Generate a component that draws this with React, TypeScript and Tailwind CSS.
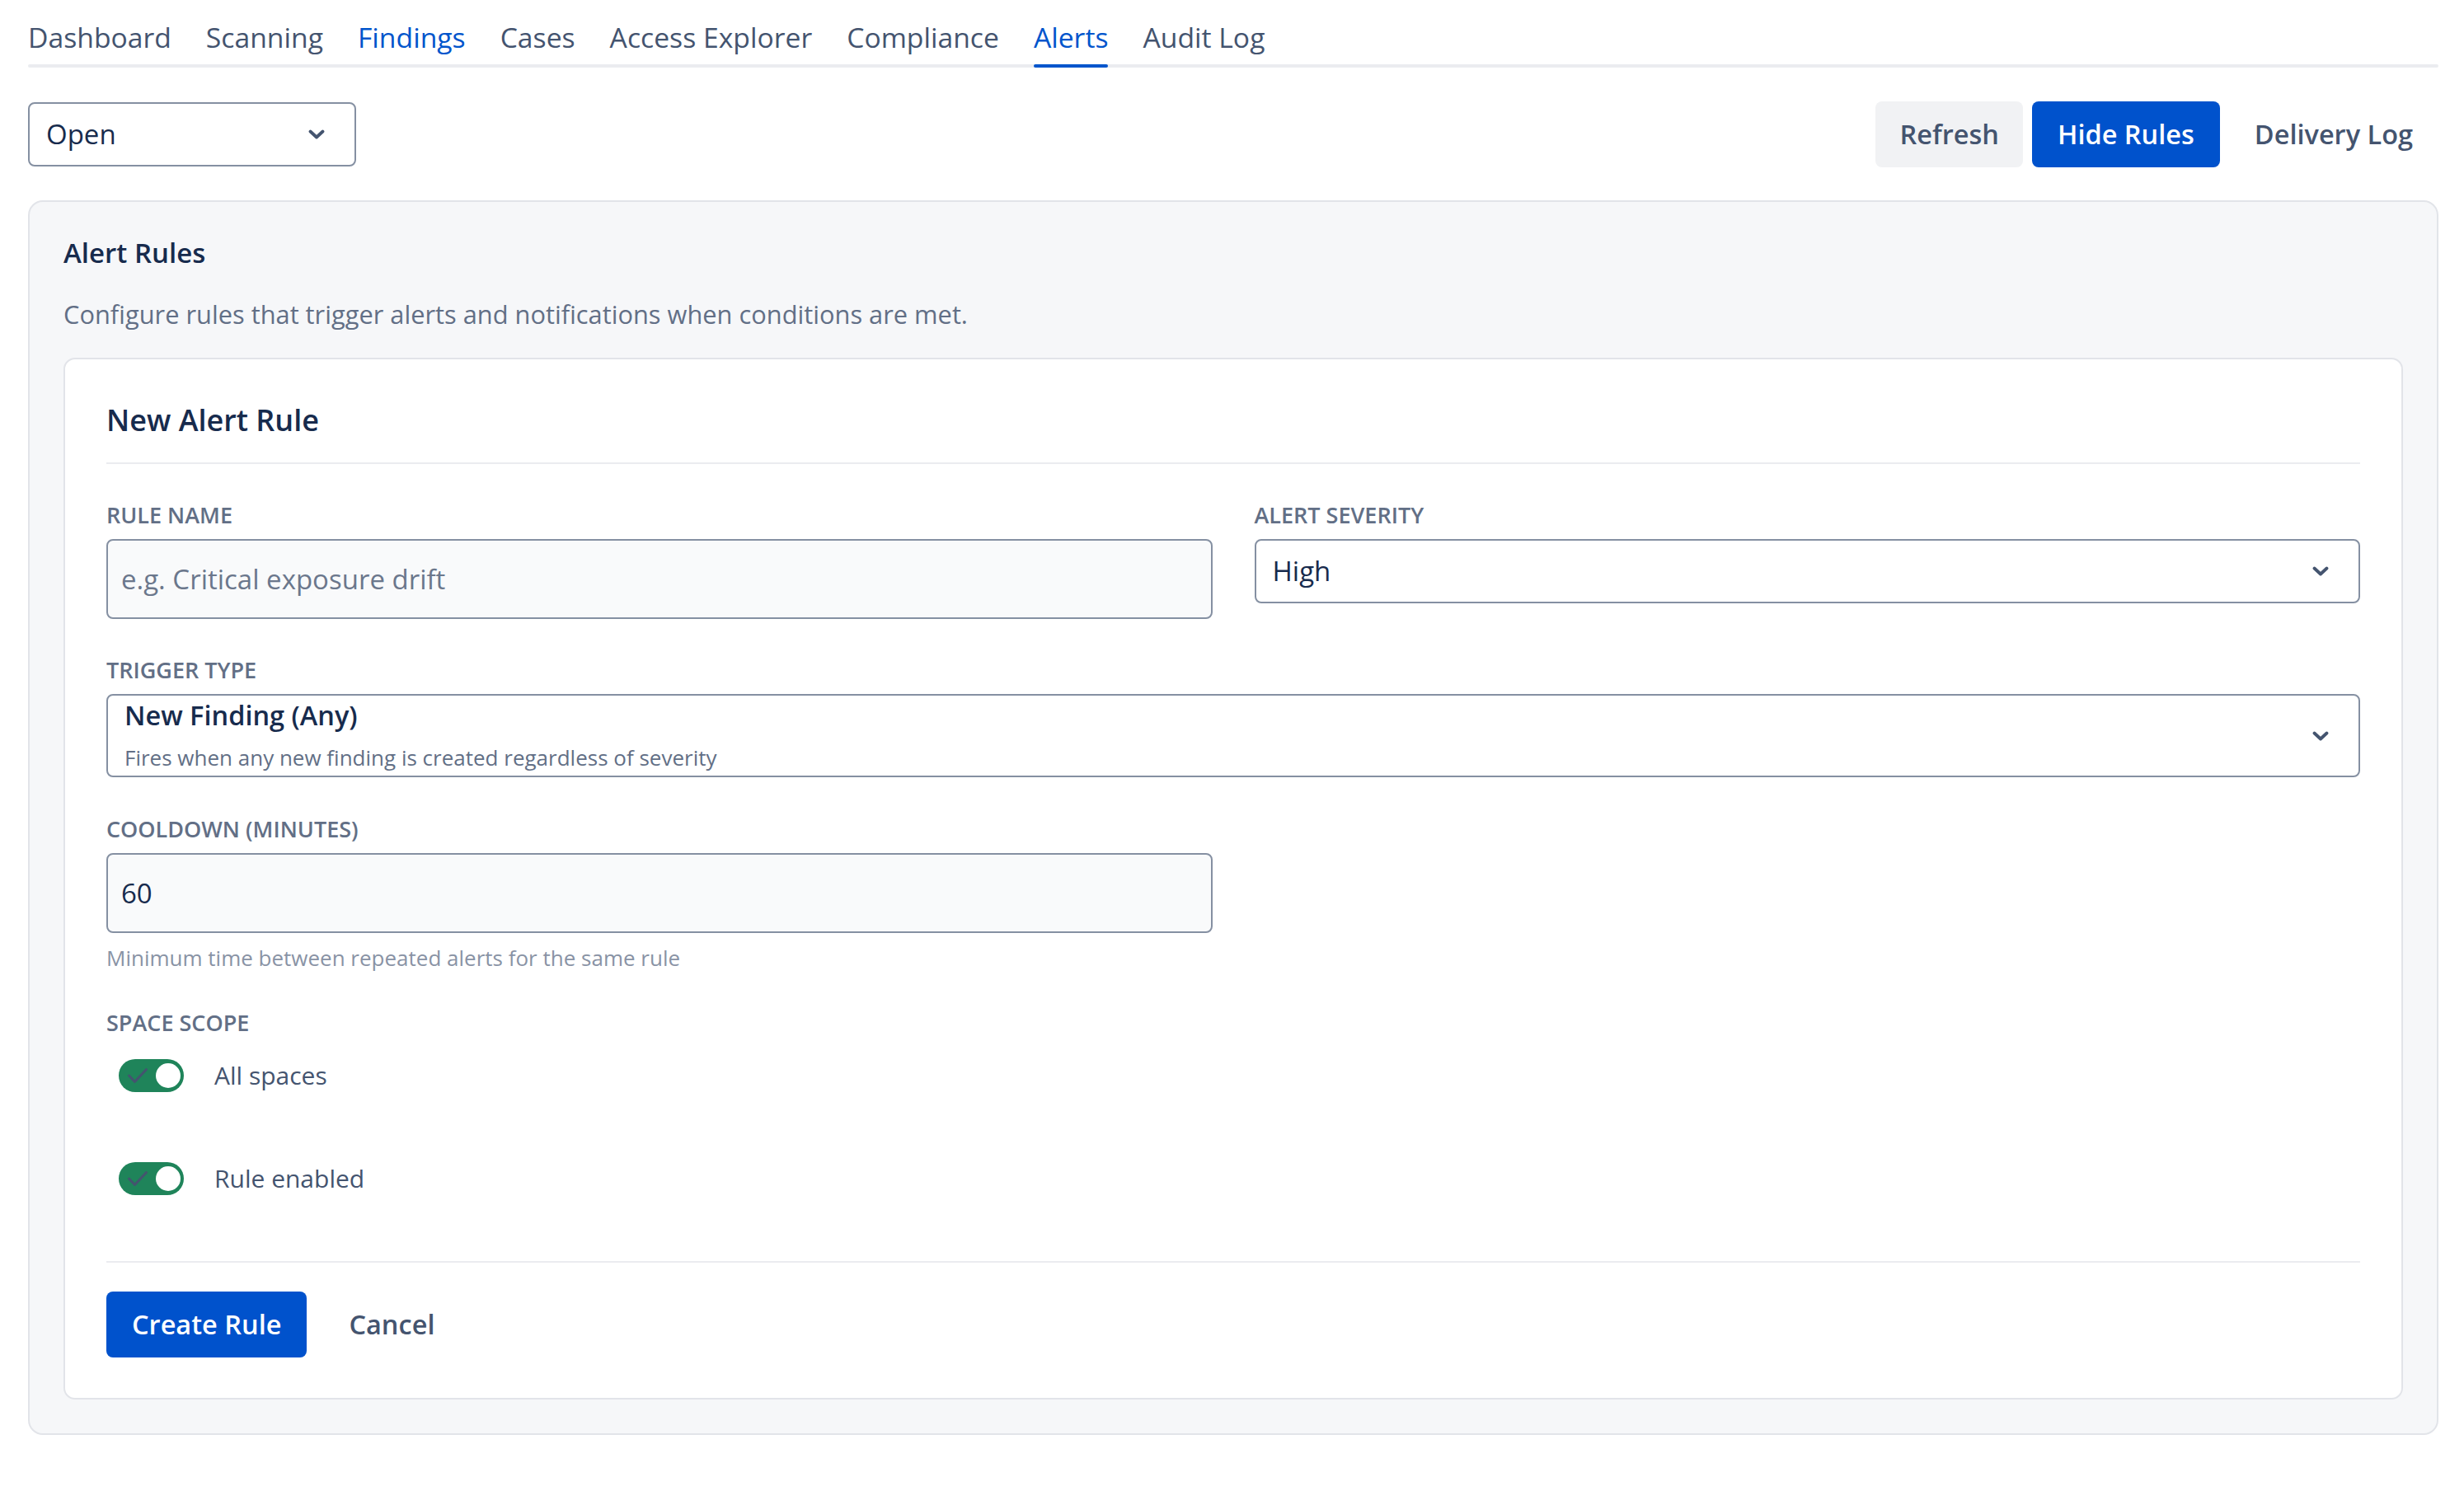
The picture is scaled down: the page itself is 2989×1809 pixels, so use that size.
import React from 'react'

const tabs = [
  'Dashboard',
  'Scanning',
  'Findings',
  'Cases',
  'Access Explorer',
  'Compliance',
  'Alerts',
  'Audit Log',
]

function Chevron() {
  return (
    <svg width="20" height="12" viewBox="0 0 20 12" fill="none" className="shrink-0">
      <path
        d="M2.5 2.5 L10 9.5 L17.5 2.5"
        stroke="#44546f"
        strokeWidth="3.8"
        strokeLinecap="round"
        strokeLinejoin="round"
      />
    </svg>
  )
}

function FieldLabel({ children }: { children: React.ReactNode }) {
  return (
    <div className="mb-[11px] text-[27px] font-semibold leading-[36px] text-[#626f86]">
      {children}
    </div>
  )
}

function Toggle({ label, className = '' }: { label: string; className?: string }) {
  return (
    <div className={`flex items-center pl-[15px] ${className}`}>
      <span className="relative inline-block h-[40px] w-[79px] shrink-0 rounded-full bg-[#1f845a]">
        <svg className="absolute left-0 top-0" width="79" height="40" viewBox="0 0 79 40" fill="none">
          <path
            d="M12.5 20 L19.5 27.5 L33.5 12.5"
            stroke="#44546f"
            strokeWidth="3"
            strokeLinecap="round"
            strokeLinejoin="round"
          />
        </svg>
        <span className="absolute right-[4px] top-[5px] h-[30px] w-[30px] rounded-full bg-white" />
      </span>
      <span className="ml-[37px] text-[30px] leading-[40px] text-[#44546f]">{label}</span>
    </div>
  )
}

export default function App() {
  return (
    <div className="min-h-screen bg-white pl-[34px] pr-[31px] font-['Open_Sans','Noto_Sans',sans-serif] text-[#172b4d]">
      {/* Section tabs */}
      <nav className="flex gap-[42px] pt-[22px]">
        {tabs.map((tab) => {
          const active = tab === 'Alerts'
          const linked = tab === 'Findings'
          return (
            <button
              key={tab}
              className={`relative pb-[10px] text-[33.7px] font-medium leading-[46px] ${
                active || linked ? 'text-[#0055cc]' : 'text-[#44546f]'
              }`}
            >
              {tab}
              {active && (
                <span className="absolute -bottom-[4px] left-0 right-0 z-10 h-[4px] rounded-full bg-[#0055cc]" />
              )}
            </button>
          )
        })}
      </nav>
      <div className="h-[4px] rounded-full bg-[#ebecf0]" />

      {/* Toolbar */}
      <div className="mt-[41px] flex items-center justify-between">
        <button className="flex h-[78px] w-[398px] items-center justify-between rounded-[8px] border-2 border-[#8590a2] bg-white pl-[20px] pr-[36px] text-[33px] leading-[44px] text-[#172b4d]">
          <span>Open</span>
          <Chevron />
        </button>
        <div className="flex items-center gap-[11px]">
          <button className="h-[80px] rounded-[8px] bg-[#f1f2f4] px-[29px] text-[32.5px] font-semibold text-[#44546f]">
            Refresh
          </button>
          <button className="h-[80px] rounded-[8px] bg-[#0052cc] px-[31px] text-[32.5px] font-semibold text-white">
            Hide Rules
          </button>
          <button className="h-[80px] rounded-[8px] px-[31px] text-[32.5px] font-semibold text-[#44546f]">
            Delivery Log
          </button>
        </div>
      </div>

      {/* Alert rules panel */}
      <section className="mt-[40px] rounded-[18px] border-2 border-[#e2e4e9] bg-[#f6f7f9] px-[41px] pb-[41px] pt-[42px]">
        <h2 className="text-[33px] font-semibold leading-[40px] text-[#172b4d]">Alert Rules</h2>
        <p className="mt-[32px] text-[30.8px] leading-[44px] text-[#626f86]">
          Configure rules that trigger alerts and notifications when conditions are met.
        </p>

        <div className="mt-[31px] rounded-[14px] border-2 border-[#e2e4e9] bg-white px-[50px] pb-[49px] pt-[50px]">
          <div className="border-b-2 border-[#ebecf0] pb-[27px]">
            <h3 className="text-[36px] font-semibold leading-[48px] text-[#172b4d]">New Alert Rule</h3>
          </div>

          <div className="mt-[44px] grid grid-cols-2 gap-x-[51px]">
            <div>
              <FieldLabel>RULE NAME</FieldLabel>
              <input
                type="text"
                placeholder="e.g. Critical exposure drift"
                className="h-[97px] w-full rounded-[8px] border-2 border-[#8590a2] bg-[#f9fafb] pl-[16px] text-[33px] text-[#172b4d] outline-none placeholder:text-[#6b778c]"
              />
            </div>
            <div>
              <FieldLabel>ALERT SEVERITY</FieldLabel>
              <button className="flex h-[78px] w-full items-center justify-between rounded-[8px] border-2 border-[#8590a2] bg-white pl-[20px] pr-[36px] text-[33px] text-[#172b4d]">
                <span>High</span>
                <Chevron />
              </button>
            </div>
          </div>

          <div className="mt-[44px]">
            <FieldLabel>TRIGGER TYPE</FieldLabel>
            <button className="flex h-[101px] w-full items-center justify-between rounded-[8px] border-2 border-[#8590a2] bg-white pl-[20px] pr-[36px] text-left">
              <span className="flex flex-col">
                <span className="text-[32.5px] font-semibold leading-[40px] text-[#172b4d]">New Finding (Any)</span>
                <span className="mt-[13px] text-[26px] leading-[36px] text-[#626f86]">
                  Fires when any new finding is created regardless of severity
                </span>
              </span>
              <Chevron />
            </button>
          </div>

          <div className="mt-[45px] grid grid-cols-2 gap-x-[51px]">
            <div>
              <FieldLabel>COOLDOWN (MINUTES)</FieldLabel>
              <input
                type="text"
                defaultValue="60"
                className="h-[97px] w-full rounded-[8px] border-2 border-[#8590a2] bg-[#f9fafb] pl-[16px] text-[33px] text-[#172b4d] outline-none"
              />
              <p className="mt-[12px] text-[26px] leading-[36px] text-[#8993a5]">
                Minimum time between repeated alerts for the same rule
              </p>
            </div>
          </div>

          <div className="mt-[43px]">
            <div className="text-[27px] font-semibold leading-[36px] text-[#626f86]">SPACE SCOPE</div>
            <Toggle label="All spaces" className="mt-[26px]" />
          </div>

          <Toggle label="Rule enabled" className="mt-[85px]" />

          <div className="mt-[80px] h-[2px] bg-[#ebecf0]" />

          <div className="mt-[35px] flex items-center gap-[20px]">
            <button className="h-[80px] rounded-[8px] bg-[#0052cc] px-[31px] text-[32.5px] font-semibold text-white">
              Create Rule
            </button>
            <button className="h-[80px] rounded-[8px] px-[31px] text-[32.5px] font-semibold text-[#44546f]">
              Cancel
            </button>
          </div>
        </div>
      </section>
    </div>
  )
}
